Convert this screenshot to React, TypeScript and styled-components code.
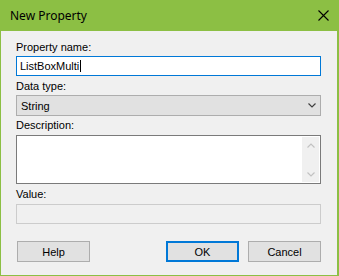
import React from "react";
import styled, { createGlobalStyle } from "styled-components";

const Global = createGlobalStyle`
  html, body { margin: 0; padding: 0; background: #f0f0f0; }
  body { width: 339px; height: 276px; overflow: hidden; }
`;

const Window = styled.div`
  box-sizing: border-box;
  width: 339px;
  height: 276px;
  border: 1px solid #8cbf44;
  border-right-width: 2px;
  border-top: none;
  background: #f0f0f0;
  display: flex;
  flex-direction: column;
  font-family: "Liberation Sans", Arial, sans-serif;
  font-size: 11px;
  color: #000;
`;

const TitleBar = styled.div`
  height: 31px;
  margin: 0 -2px 0 -1px;
  background: #8cbf44;
  display: flex;
  align-items: center;
  justify-content: space-between;
  padding: 0 10px 0 10px;
  box-sizing: border-box;
`;

const Title = styled.span`
  font-family: "Noto Sans", "Segoe UI", sans-serif;
  font-size: 12px;
  color: #000;
  margin-top: -1px;
`;

const Body = styled.div`
  flex: 1;
  display: flex;
  flex-direction: column;
  padding: 10px 16px 0 15px;
`;

const Label = styled.div<{ $gap: number; $top: number }>`
  height: 13px;
  line-height: 13px;
  margin-top: ${(p) => p.$top}px;
  margin-bottom: ${(p) => p.$gap}px;
  white-space: nowrap;
`;

const TextBox = styled.div`
  box-sizing: border-box;
  height: 20px;
  border: 1px solid #0078d7;
  background: #fff;
  display: flex;
  align-items: center;
  padding-left: 3px;
`;

const Caret = styled.span`
  display: inline-block;
  width: 1px;
  height: 12px;
  background: #000;
  margin-left: 1px;
`;

const Combo = styled.div`
  box-sizing: border-box;
  height: 21px;
  border: 1px solid #adadad;
  background: #e1e1e1;
  display: flex;
  align-items: center;
  justify-content: space-between;
  padding: 0 4px 0 4px;
`;

const MultiLine = styled.div`
  box-sizing: border-box;
  height: 49px;
  border: 1px solid #7a7a7a;
  background: #fff;
  display: flex;
  justify-content: flex-end;
  padding: 1px;
`;

const ScrollBar = styled.div`
  width: 17px;
  background: #f0f0f0;
  display: flex;
  flex-direction: column;
  justify-content: space-between;
  align-items: center;
  padding: 6px 0 5px;
  box-sizing: border-box;
`;

const Disabled = styled.div`
  box-sizing: border-box;
  height: 20px;
  border: 1px solid #cccccc;
  background: #f0f0f0;
`;

const ButtonRow = styled.div`
  display: flex;
  margin-top: 17px;
  padding-left: 1px;
`;

const Button = styled.div<{ $primary?: boolean }>`
  box-sizing: border-box;
  width: 73px;
  height: 21px;
  background: #e1e1e1;
  border: ${(p) => (p.$primary ? "2px solid #0078d7" : "1px solid #adadad")};
  display: flex;
  align-items: center;
  justify-content: center;
`;

const Spacer = styled.div`
  flex: 1;
`;

const ButtonGap = styled.div`
  width: 9px;
`;

const Chevron = ({ up, color }: { up?: boolean; color: string }) => (
  <svg width="8" height="5" viewBox="0 0 8 5">
    <polyline
      points={up ? "0.5,4.5 4,1 7.5,4.5" : "0.5,0.5 4,4 7.5,0.5"}
      fill="none"
      stroke={color}
      strokeWidth="1.2"
    />
  </svg>
);

export default function App() {
  return (
    <>
      <Global />
      <Window>
        <TitleBar>
          <Title>New Property</Title>
          <svg width="11" height="11" viewBox="0 0 11 11">
            <path d="M0.5,0.5 L10.5,10.5 M10.5,0.5 L0.5,10.5" stroke="#000" strokeWidth="1.1" />
          </svg>
        </TitleBar>
        <Body>
          <Label $top={0} $gap={2}>Property name:</Label>
          <TextBox>
            ListBoxMulti
            <Caret />
          </TextBox>
          <Label $top={4} $gap={2}>Data type:</Label>
          <Combo>
            <span>String</span>
            <Chevron color="#404040" />
          </Combo>
          <Label $top={3} $gap={3}>Description:</Label>
          <MultiLine>
            <ScrollBar>
              <Chevron up color="#c2c2c2" />
              <Chevron color="#c2c2c2" />
            </ScrollBar>
          </MultiLine>
          <Label $top={4} $gap={3}>Value:</Label>
          <Disabled />
          <ButtonRow>
            <Button>Help</Button>
            <Spacer />
            <Button $primary>OK</Button>
            <ButtonGap />
            <Button>Cancel</Button>
          </ButtonRow>
        </Body>
      </Window>
    </>
  );
}
